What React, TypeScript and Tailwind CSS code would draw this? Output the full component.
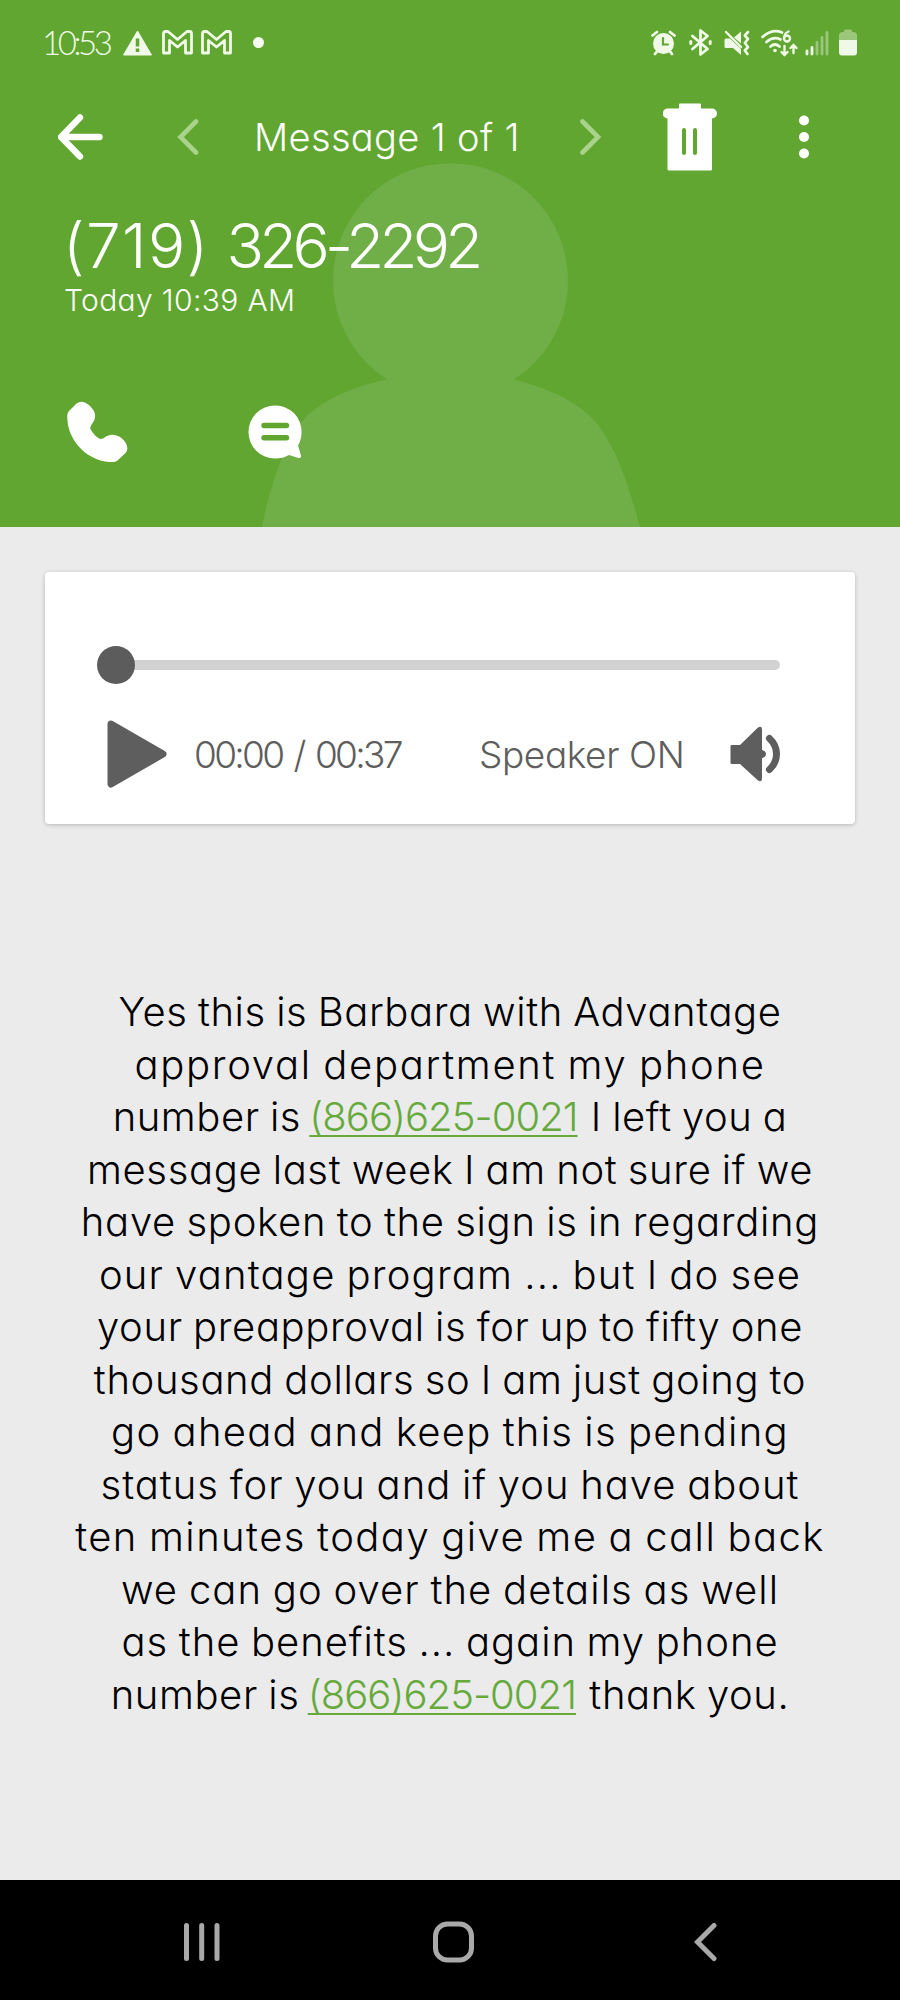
import React from 'react';

interface TranscriptLine {
  text: string;
  phone?: string;
  after?: string;
  tracking: string;
}

const TRANSCRIPT: TranscriptLine[] = [
  { text: 'Yes this is Barbara with Advantage', tracking: 'tracking-[0.6px]' },
  { text: 'approval department my phone', tracking: 'tracking-[1.7px]' },
  { text: 'number is ', phone: '(866)625-0021', after: ' I left you a', tracking: 'tracking-[0.55px]' },
  { text: 'message last week I am not sure if we', tracking: 'tracking-[0.65px]' },
  { text: 'have spoken to the sign is in regarding', tracking: 'tracking-[0.72px]' },
  { text: 'our vantage program ... but I do see', tracking: 'tracking-[1.2px]' },
  { text: 'your preapproval is for up to fifty one', tracking: 'tracking-[0.63px]' },
  { text: 'thousand dollars so I am just going to', tracking: 'tracking-[0.63px]' },
  { text: 'go ahead and keep this is pending', tracking: 'tracking-[1.3px]' },
  { text: 'status for you and if you have about', tracking: 'tracking-[0.98px]' },
  { text: 'ten minutes today give me a call back', tracking: 'tracking-[1.45px]' },
  { text: 'we can go over the details as well', tracking: 'tracking-[1.05px]' },
  { text: 'as the benefits ... again my phone', tracking: 'tracking-[0.95px]' },
  { text: 'number is ', phone: '(866)625-0021', after: ' thank you.', tracking: 'tracking-[0.6px]' },
];

function GmailIcon() {
  return (
    <svg width="31" height="25" viewBox="0 0 31 25" fill="none" stroke="currentColor" strokeWidth="2.8" strokeLinejoin="round">
      <path d="M1.5 3.5Q1.5 1.5 3.5 1.5H6L15.5 9.5L25 1.5H27.5Q29.5 1.5 29.5 3.5V23H23.5V10.5L15.5 17L7.5 10.5V23H1.5Z" />
    </svg>
  );
}

function StatusBar() {
  return (
    <div className="flex h-[85px] items-center pl-[42px] pr-[43px] text-[#f0f9e8]">
      <span className="w-[81px] whitespace-nowrap font-['Lato'] text-[33px] font-light leading-none tracking-[-3.4px]">10:53</span>
      <svg width="29" height="26" viewBox="0 0 29 26">
        <path d="M14.5 1L28.5 25H0.5Z" fill="currentColor" stroke="currentColor" strokeLinejoin="round" />
        <path d="M14.5 8.5V16.5M14.5 18.5V22" stroke="#61a631" strokeWidth="3.5" />
      </svg>
      <div className="ml-[10px] flex gap-[8px]">
        <GmailIcon />
        <GmailIcon />
      </div>
      <span className="ml-[21px] h-[11px] w-[11px] rounded-full bg-[#f6fcf0]" />

      <div className="ml-auto flex items-center">
        {/* alarm */}
        <svg width="25" height="26" viewBox="0 0 25 26" fill="none" stroke="currentColor" strokeLinecap="round">
          <circle cx="12.5" cy="13.5" r="10.5" fill="currentColor" stroke="none" />
          <path d="M1.5 5.5L6 2M23.5 5.5L19 2M4 24L6 21.5M21 24L19 21.5" strokeWidth="2.8" />
          <path d="M12 8V14.5H17" stroke="#61a631" strokeWidth="2.2" />
        </svg>
        {/* bluetooth */}
        <svg className="ml-[13px]" width="23" height="27" viewBox="0 0 23 27" fill="none" stroke="currentColor" strokeWidth="2.8" strokeLinejoin="round" strokeLinecap="round">
          <path d="M3.5 7L18.5 20L11.5 25.5V1.5L18.5 7L3.5 20" />
          <path d="M1.8 12.5V14.5M21.2 12.5V14.5" strokeWidth="3" />
        </svg>
        {/* vibrate / mute */}
        <svg className="ml-[12px]" width="26" height="26" viewBox="0 0 26 26">
          <path d="M2 8.5H6L17 19V25L9 18H2Q0.5 18 0.5 16.5V10Q0.5 8.5 2 8.5ZM10 7.5L17 1.5V13.5Z" fill="currentColor" />
          <path d="M2 2L17 17" stroke="currentColor" strokeWidth="2.4" strokeLinecap="round" />
          <path d="M24 2L20.8 5.5L24 9L20.8 13L24 17L20.8 20.5L23.5 24" fill="none" stroke="currentColor" strokeWidth="2.6" strokeLinejoin="round" strokeLinecap="round" />
        </svg>
        {/* wifi */}
        <svg className="ml-[11px]" width="37" height="28" viewBox="0 0 37 28" fill="none" stroke="currentColor" strokeWidth="2.7" strokeLinecap="round">
          <path d="M1.5 8Q11.5 -0.5 21 3.5M5.5 13Q12.5 7 19.5 10.5M9.5 17.5Q14 13.5 18.5 17.5" />
          <circle cx="14" cy="21.5" r="1.8" fill="currentColor" stroke="none" />
          <circle cx="26" cy="9.5" r="3" strokeWidth="2.4" />
          <path d="M23 9Q23.5 4 27.5 2.5" strokeWidth="2.4" />
          <path d="M23.5 17V26M20.5 23L23.5 26L26.5 23M32.5 24V16M29.5 19L32.5 16L35.5 19" strokeWidth="2.4" />
        </svg>
        {/* signal */}
        <svg className="ml-[7px]" width="24" height="26" viewBox="0 0 24 26" stroke="currentColor" strokeWidth="2.8" strokeLinecap="round">
          <path d="M2 21V24M7 17.5V24" />
          <path d="M12 12.5V24M17 7.5V24M22 2.5V24" opacity="0.4" />
        </svg>
        {/* battery */}
        <svg className="ml-[10px]" width="18" height="27" viewBox="0 0 18 27" fill="currentColor">
          <path d="M5 2Q5 0.5 6.5 0.5H11.5Q13 0.5 13 2V3H15Q18 3.5 18 6.5V11H0V6.5Q0 3.5 3 3H5Z" opacity="0.4" />
          <path d="M0 11H18V23.5Q18 26.5 15 26.5H3Q0 26.5 0 23.5Z" />
        </svg>
      </div>
    </div>
  );
}

function Toolbar() {
  return (
    <div className="flex h-[103px] items-center pl-[58px]">
      <svg width="45" height="46" viewBox="0 0 45 46" fill="none" stroke="white" strokeWidth="6.4" strokeLinecap="round" strokeLinejoin="round">
        <path d="M22 3.5L3 23L22 42.5M4 23H41.5" />
      </svg>
      <svg className="ml-[74px]" width="22" height="38" viewBox="0 0 22 38" fill="none" stroke="#a9d38c" strokeWidth="4.6" strokeLinecap="round">
        <path d="M19 3.5L3.5 19L19 34.5" />
      </svg>
      <h1 className="ml-[55px] w-[326px] whitespace-nowrap text-[38px] font-light leading-none tracking-[0.35px]">Message 1 of 1</h1>
      <svg width="22" height="38" viewBox="0 0 22 38" fill="none" stroke="#a9d38c" strokeWidth="4.6" strokeLinecap="round">
        <path d="M2.5 3.5L18 19L2.5 34.5" />
      </svg>
      <svg className="ml-[61px]" width="54" height="68" viewBox="0 0 54 68">
        <path d="M17 0.5H37Q38 0.5 38 1.5V5.5H49A4.8 4.8 0 0 1 49 15.5V66Q49 67.5 47.5 67.5H6Q4.5 67.5 4.5 66V15.5A4.8 4.8 0 0 1 5 5.5H16V1.5Q16 0.5 17 0.5Z" fill="white" />
        <path d="M21 27V50M32 27V50" stroke="#61a631" strokeWidth="4" strokeLinecap="round" />
      </svg>
      <svg className="ml-[81px]" width="12" height="44" viewBox="0 0 12 44" fill="white">
        <circle cx="6" cy="5.5" r="5" />
        <circle cx="6" cy="22" r="5" />
        <circle cx="6" cy="38.5" r="5" />
      </svg>
    </div>
  );
}

function Header() {
  return (
    <header className="relative h-[527px] overflow-hidden bg-[#61a631] text-white">
      <svg className="absolute bottom-0 left-[262px]" width="380" height="364" viewBox="262 163 380 364">
        <path d="M387 379.5A117.5 117.5 0 1 1 514 379.5C548 388 582 403 599 426C618 452 629 487 640 527H262C269 491 281 452 299 425C315 403 350 387 387 379.5Z" fill="#70ae47" />
      </svg>
      <div className="relative">
        <StatusBar />
        <Toolbar />
        <div className="pl-[63px]">
          <div className="flex h-[94px] items-center gap-[17px] whitespace-nowrap pt-[21px] text-[62px] font-light leading-none">
            <span className="tracking-[1.4px]">(719)</span>
            <span className="tracking-[-4.8px]">326-2292</span>
          </div>
          <div className="flex h-[36px] items-center whitespace-nowrap pl-[1px] text-[30px] font-light leading-none tracking-[0.35px]">Today 10:39 AM</div>
        </div>
        <div className="flex items-start pl-[67px] pt-[83px]">
          <svg width="61" height="62" viewBox="0 0 61 62" fill="white">
            <path d="M8.5 3.5C13 -1 18 0 23 5C28 10 30 15 26 21.5Q22.5 25.5 23.5 28Q27 35 33 38Q35.5 38.5 39 35.5C46 32 52 34 57 39.5C61.5 45 61 49.5 58 52.5L51 59C48.5 61.5 44 61.5 38 60.5C18 57 2 39 0.5 20C0 14 0 12 3 9Z" />
          </svg>
          <svg className="ml-[120px] mt-[4px]" width="54" height="54" viewBox="0 0 54 54">
            <path d="M27 0.5A26 26 0 0 1 53.5 27Q53.5 35 50 40.5L53 50.5Q53.5 53.5 50.5 53L41 50Q35 53.5 27 53.5A26.5 26.5 0 0 1 27 0.5Z" fill="white" />
            <path d="M16 20.5H38.5M16 32.7H38.5" stroke="#61a631" strokeWidth="5.4" strokeLinecap="round" />
          </svg>
        </div>
      </div>
    </header>
  );
}

function Player() {
  return (
    <section className="mx-[45px] mt-[45px] h-[252px] rounded-[4px] bg-white pt-[74px] text-[#5e5e5e] shadow-[0_1px_4px_rgba(0,0,0,0.22)]">
      <div className="ml-[52px] flex h-[38px] w-[683px] items-center">
        <span className="relative z-10 h-[38px] w-[38px] rounded-full bg-[#5c5c5c]" />
        <span className="-ml-[4px] h-[10px] flex-1 rounded-r-full bg-[#d2d2d2]" />
      </div>
      <div className="mt-[35px] flex h-[70px] items-center pl-[62px]">
        <svg width="61" height="70" viewBox="0 0 61 70">
          <path d="M4 5L56 35L4 65Z" fill="currentColor" stroke="currentColor" strokeWidth="7" strokeLinejoin="round" />
        </svg>
        <span className="ml-[26px] w-[285px] whitespace-nowrap pt-[1px] text-[37px] font-light leading-none tracking-[-2.7px] [word-spacing:3.5px]">00:00 / 00:37</span>
        <span className="w-[251px] whitespace-nowrap pt-[1px] text-[37px] font-light leading-none tracking-[-0.4px]">Speaker ON</span>
        <svg width="51" height="56" viewBox="0 0 51 56">
          <path d="M2 19H10L28 1.5Q32 -1 32 4V24Q36 25 36 28T32 32V52Q32 57 28 54.5L10 38H2Q0.5 38 0.5 37V20Q0.5 19 2 19Z" fill="currentColor" />
          <path d="M39.5 12.5Q46.5 19 46.5 28T39.5 43.5" fill="none" stroke="currentColor" strokeWidth="7" strokeLinecap="round" />
        </svg>
      </div>
    </section>
  );
}

function Transcript() {
  return (
    <main className="mt-[162px] flex flex-col items-center text-[40px] font-light text-black [word-spacing:-1.5px]">
      {TRANSCRIPT.map((line, i) => (
        <p key={i} className={`h-[52.5px] whitespace-pre leading-[52.5px] ${line.tracking}`}>
          {line.text}
          {line.phone && (
            <a className="-ml-[2px] mr-[3px] tracking-[-0.95px] text-[#65aa3b] underline decoration-2 underline-offset-[4px] [text-decoration-skip-ink:none]">{line.phone}</a>
          )}
          {line.after}
        </p>
      ))}
    </main>
  );
}

function NavBar() {
  return (
    <nav className="mt-auto flex h-[120px] items-center bg-black pl-[184px] pt-[4px] text-[#a9a9a9]">
      <svg width="36" height="40" viewBox="0 0 36 40" stroke="currentColor" strokeWidth="5" strokeLinecap="round">
        <path d="M2.5 3.5V36.5M17.7 3.5V36.5M33 3.5V36.5" />
      </svg>
      <svg className="ml-[213px]" width="41" height="42" viewBox="0 0 41 42" fill="none" stroke="currentColor" strokeWidth="5">
        <rect x="2.5" y="3" width="36" height="36" rx="12" />
      </svg>
      <svg className="ml-[220px]" width="24" height="40" viewBox="0 0 24 40" fill="none" stroke="currentColor" strokeWidth="5" strokeLinecap="round">
        <path d="M20 3.5L3.5 20L20 36.5" />
      </svg>
    </nav>
  );
}

export default function App() {
  return (
    <div className="flex h-[2000px] w-[900px] flex-col overflow-hidden bg-[#ebebeb] font-['Inter','Liberation_Sans',sans-serif] [font-feature-settings:'cv11']">
      <Header />
      <Player />
      <Transcript />
      <NavBar />
    </div>
  );
}
